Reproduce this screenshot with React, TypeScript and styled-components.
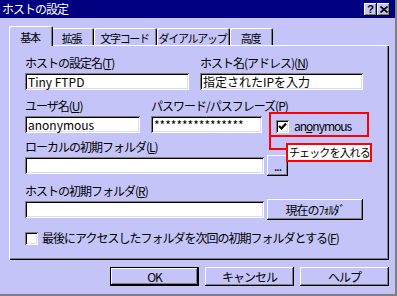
import styled, { createGlobalStyle } from "styled-components";

const face = "#c4c4f8";
const shadow = "#808080";
const navy = "#000080";
const red = "#ff0000";
const font = `"Noto Sans CJK JP", "Noto Sans", sans-serif`;

const GlobalStyle = createGlobalStyle`
	* { box-sizing: border-box; }
	html, body { margin: 0; padding: 0; background: ${face}; }
	body { font-family: ${font}; font-size: 12px; color: #000; }
`;

export default function App() {
	return (
		<>
			<GlobalStyle />
			<Window>
				<TitleBar>
					<TitleText>ホストの設定</TitleText>
					<TitleButtons>
						<TitleButton>?</TitleButton>
						<TitleButton>
							<svg width="8" height="7" viewBox="0 0 8 7">
								<path d="M0.5 0.5 L7.5 6.5 M7.5 0.5 L0.5 6.5" stroke="#000" strokeWidth="1.6" />
							</svg>
						</TitleButton>
					</TitleButtons>
				</TitleBar>

				<Body>
					<TabRow>
						<Tab $w={40} $active>基本</Tab>
						<Tab $w={43}>拡張</Tab>
						<Tab $w={63}>文字コード</Tab>
						<Tab $w={73}>ダイアルアップ</Tab>
						<Tab $w={43}>高度</Tab>
					</TabRow>

					<Panel>
						<Row>
							<Field $w={164}>
								<Label>ホストの設定名(<u>T</u>)</Label>
								<TextBox defaultValue="Tiny FTPD" />
							</Field>
							<Field $w={163}>
								<Label>ホスト名(アドレス)(<u>N</u>)</Label>
								<TextBox defaultValue="指定されたIPを入力" />
							</Field>
						</Row>

						<Row $mt={9}>
							<Field $w={115}>
								<Label>ユーザ名(<u>U</u>)</Label>
								<TextBox defaultValue="anonymous" />
							</Field>
							<Field $w={111}>
								<Label>パスワード/パスフレーズ(<u>P</u>)</Label>
								<TextBox defaultValue="****************" />
							</Field>
							<CheckItem $ml={3}>
								<CheckBox>
									<svg width="9" height="9" viewBox="0 0 9 9">
										<path d="M1 4 L3.5 6.5 L8 1.5" stroke="#000" strokeWidth="2.2" fill="none" />
									</svg>
								</CheckBox>
								<CheckText>
									an<u>o</u>nymous
								</CheckText>
							</CheckItem>
						</Row>

						<Row $mt={7}>
							<Field $w={263}>
								<Label>ローカルの初期フォルダ(<u>L</u>)</Label>
								<InputRow>
									<TextBox $w={239} />
									<Button $w={21}>...</Button>
								</InputRow>
							</Field>
						</Row>

						<Row $mt={10}>
							<Field $w={338}>
								<Label>ホストの初期フォルダ(<u>R</u>)</Label>
								<InputRow>
									<TextBox $w={239} />
									<Button $w={96}>現在のﾌｫﾙﾀﾞ</Button>
								</InputRow>
							</Field>
						</Row>

						<Row $mt={13}>
							<CheckItem $gap={4}>
								<CheckBox />
								<CheckText>最後にアクセスしたフォルダを次回の初期フォルダとする(<u>F</u>)</CheckText>
							</CheckItem>
						</Row>

						{/* red annotation drawn over the dialog */}
						<Callout />
						<Connector />
						<Note>チェックを入れる</Note>
					</Panel>

					<ButtonRow>
						<Button $w={89} $h={19} $default>
							OK
						</Button>
						<Button $w={89} $h={19}>
							キャンセル
						</Button>
						<Button $w={89} $h={19}>
							ヘルプ
						</Button>
					</ButtonRow>
				</Body>
			</Window>
		</>
	);
}

const Window = styled.div`
	width: 397px;
	height: 296px;
	display: flex;
	flex-direction: column;
	background: ${face};
	border-right: 2px solid ${shadow};
	border-bottom: 2px solid ${shadow};
	overflow: hidden;
`;

const TitleBar = styled.div`
	height: 18px;
	flex-shrink: 0;
	display: flex;
	align-items: center;
	justify-content: space-between;
	padding: 0 5px 0 2px;
	background: ${navy};
	color: #fff;
`;

const TitleText = styled.span`
	font-size: 12px;
	line-height: 18px;
	letter-spacing: -1px;
	white-space: nowrap;
`;

const TitleButtons = styled.div`
	display: flex;
`;

const TitleButton = styled.span`
	width: 13px;
	height: 13px;
	display: flex;
	align-items: center;
	justify-content: center;
	background: ${face};
	color: #000;
	font-family: "Liberation Sans", Arial, sans-serif;
	font-weight: 700;
	font-size: 11px;
	line-height: 1;
	box-shadow: inset -1px -1px #000, inset 1px 1px #fff, inset -2px -2px ${shadow};
`;

const Body = styled.div`
	flex: 1;
	display: flex;
	flex-direction: column;
	padding: 8px 6px 0 9px;
`;

const TabRow = styled.div`
	height: 19px;
	display: flex;
	align-items: flex-end;
	padding-left: 2px;
`;

const Tab = styled.div<{ $w: number; $active?: boolean }>`
	position: relative;
	z-index: ${({ $active }) => ($active ? 1 : 0)};
	width: ${({ $w, $active }) => ($active ? $w + 4 : $w)}px;
	height: ${({ $active }) => ($active ? 20 : 17)}px;
	margin: ${({ $active }) => ($active ? "0 -2px -1px" : "0")};
	padding: ${({ $active }) => ($active ? "4px 2px 0 0" : "3px 2px 0 0")};
	display: flex;
	justify-content: center;
	font-size: 11px;
	line-height: 14px;
	letter-spacing: -1.3px;
	white-space: nowrap;
	background: ${face};
	border-radius: 2px 2px 0 0;
	box-shadow: inset 1px 1px #fff, inset -1px 0 #000, inset -2px 0 ${shadow};
`;

const Panel = styled.div`
	position: relative;
	width: 380px;
	height: 215px;
	padding: 11px 0 0 16px;
	box-shadow: inset 1px 1px #fff, inset -1px -1px #000, inset -2px -2px ${shadow};
`;

const Row = styled.div<{ $mt?: number }>`
	display: flex;
	align-items: flex-end;
	gap: 11px;
	margin-top: ${({ $mt }) => $mt ?? 0}px;
`;

const Field = styled.div<{ $w: number }>`
	width: ${({ $w }) => $w}px;
	display: flex;
	flex-direction: column;
	gap: 3px;
`;

const Label = styled.span`
	line-height: 14px;
	letter-spacing: -1px;
	white-space: nowrap;
`;

const TextBox = styled.input<{ $w?: number }>`
	width: ${({ $w }) => ($w ? `${$w}px` : "100%")};
	height: 17px;
	flex-shrink: 0;
	padding: 0 3px;
	border: none;
	outline: none;
	background: #fff;
	font-family: ${font};
	font-size: 12px;
	color: #000;
	box-shadow: inset 1px 1px ${shadow}, inset -1px -1px #fff, inset 2px 2px #000, inset -2px -2px #dcdcf8;
`;

const InputRow = styled.div`
	height: 17px;
	display: flex;
	align-items: center;
	gap: 3px;
`;

const Button = styled.button<{ $w: number; $h?: number; $default?: boolean }>`
	width: ${({ $w }) => $w}px;
	height: ${({ $h }) => $h ?? 21}px;
	flex-shrink: 0;
	padding: 0;
	border: none;
	background: ${face};
	font-family: ${font};
	font-size: 12px;
	line-height: 14px;
	letter-spacing: -1px;
	color: #000;
	box-shadow: ${({ $default }) =>
		$default
			? `inset 0 0 0 1px #000, inset -2px -2px #000, inset 2px 2px #fff, inset -3px -3px ${shadow}`
			: `inset -1px -1px #000, inset 1px 1px #fff, inset -2px -2px ${shadow}`};
`;

const CheckItem = styled.div<{ $gap?: number; $ml?: number }>`
	display: flex;
	align-items: center;
	gap: ${({ $gap }) => $gap ?? 5}px;
	margin-left: ${({ $ml }) => $ml ?? 0}px;
	height: 14px;
`;

const CheckBox = styled.span`
	width: 13px;
	height: 13px;
	flex-shrink: 0;
	display: flex;
	align-items: center;
	justify-content: center;
	background: #fff;
	box-shadow: inset 1px 1px ${shadow}, inset -1px -1px #fff, inset 2px 2px #000, inset -2px -2px #dcdcf8;
`;

const CheckText = styled.span`
	line-height: 14px;
	letter-spacing: -1px;
	white-space: nowrap;
`;

const Callout = styled.div`
	position: absolute;
	left: 260px;
	top: 67px;
	width: 100px;
	height: 25px;
	border: 2px solid ${red};
`;

const Connector = styled.div`
	position: absolute;
	left: 260px;
	top: 92px;
	width: 17px;
	height: 13px;
	border-left: 2px solid ${red};
	border-bottom: 2px solid ${red};
`;

const Note = styled.div`
	position: absolute;
	left: 277px;
	top: 98px;
	width: 86px;
	height: 19px;
	padding-left: 1px;
	border: 2px solid ${red};
	background: #fff;
	font-size: 11px;
	line-height: 15px;
	letter-spacing: -0.9px;
	white-space: nowrap;
	overflow: hidden;
`;

const ButtonRow = styled.div`
	display: flex;
	justify-content: flex-end;
	gap: 6px;
	margin-top: 7px;
`;
